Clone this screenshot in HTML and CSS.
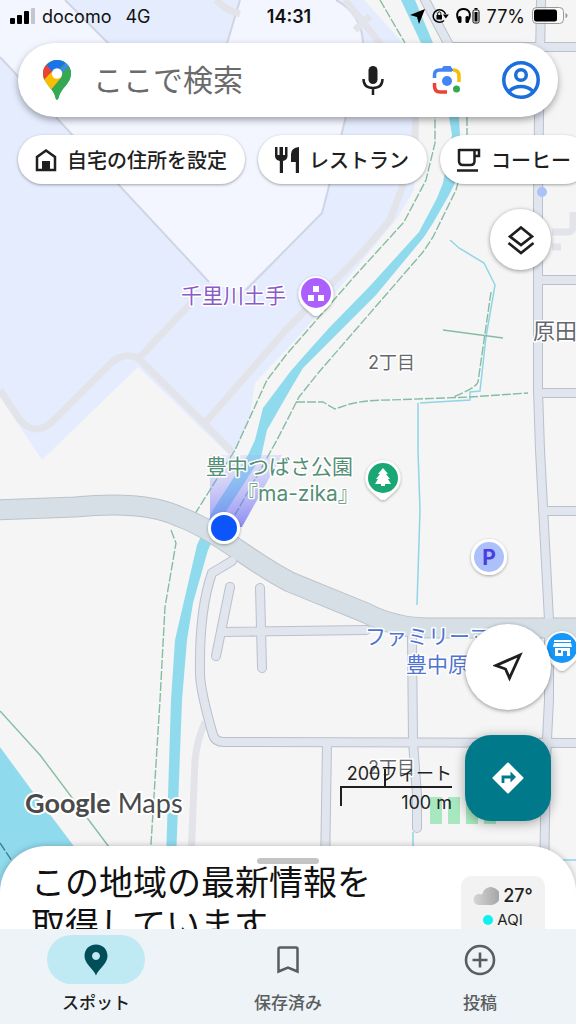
FILE: index.html
```html
<!DOCTYPE html>
<html lang="ja">
<head>
  <meta charset="UTF-8" />
  <meta name="viewport" content="width=device-width, initial-scale=1" />
  <title>Google Maps</title>
  <link rel="stylesheet" href="styles.css">
</head>
<body>
  <div class="app">
    <svg class="map" viewBox="0 0 576 1024" preserveAspectRatio="xMidYMin slice">
      <defs>
        <linearGradient id="beam" x1="0.3" y1="1" x2="0.1" y2="0">
          <stop offset="0" stop-color="#5a58f0" stop-opacity="0.65" />
          <stop offset="1" stop-color="#a9a8ff" stop-opacity="0.15" />
        </linearGradient>
        <filter id="shadow" x="-30%" y="-30%" width="160%" height="160%">
          <feDropShadow dx="0" dy="1" stdDeviation="1.5" flood-opacity="0.35" />
        </filter>
      </defs>

      <!-- airport -->
      <path class="airport" d="M0 0H364L403 43L418 80V117L414 190L396 220L300 335L255 383L250 415L236 450L230 456L138 367L42 460L0 397Z" />
      <path class="apron" d="M0 0H336Q362 14 363 43L345 120L328 190L322 213L240 293L209 282L0 57Z" />
      <path class="airport edge" d="M65 0L160 95L222 60L240 0" />
      <path class="line edge" d="M0 57L209 282M336 0Q362 14 363 43L345 120L328 190L322 213L246 290" />
      <path class="line path" d="M216 0Q226 10 240 14M345 0L380 43L416 100L415 140L402 188L390 220L360 255L286 330L205 423M355 30L370 16" />
      <path class="line path" d="M0 390L20 420Q36 438 54 420L112 362Q125 352 138 358L205 424L232 452M140 357L192 302" />

      <!-- water -->
      <path class="water" d="M401 0H415L433 43L457 100L459 117L460 135L455 183L449 195L433 223L424 237L376 295L323 348L303 368L290 390L267 430L261 457L227 510L208 550L193 603L187 640L182 700L176 860H166L171 700L175 640L197 545L213 510L248 455L255 440L263 408L290 372L303 357L329 328L369 287L419 232L437 198L443 183L452 135L449 117L421 43Z" />
      <path class="water" d="M0 747L30 788L73 845L110 900H0Z" />
      <path class="line stream" d="M450 240L459 248L484 263L495 285L486 337L480 391L470 392V400L420 403M418 403L418 450L420 510L417 605M413 832V860M555 860H576" />

      <!-- trails -->
      <path class="line trail" d="M380 0L405 43L435 117V143L426 180L404 222L353 278L286 355L267 380L235 450L193 517" />
      <path class="line trail" d="M467 117V150L456 190L433 237L423 252L319 372L299 397L277 440L235 515" />
      <path class="line trail" d="M171 530L176 543L165 607L160 700L150 860" />
      <path class="line trail" d="M296 402H323L335 409L350 404Q365 400 390 400L470 397L528 393M491 292L478 382Q476 388 453 397" />
      <path class="line trail solid" d="M443 330L503 338M0 711L40 755L115 855" />
      <path class="line trail dark" d="M0 843L14 864" />

      <!-- roads -->
      <path class="line path" d="M552 232H568Q573 232 573 226V212M552 247H561" />
      <path class="line path" d="M205 722Q197 740 195 760L191 860" />
      <g class="line road-edge">
        <path id="street" d="M425 0L450 47H576M541 0L539 117L538 200V390L540 450L549 620V700L546 760L544 880M538 280H576M538 393H576M543 511H576M232 561L212 573Q199 610 200 673Q200 690 213 735Q215 742 224 742L576 743M412 637L413 742L417 795V828M327 743L325 870M230 587L216 656M260 588L262 668M223 632L366 630" />
      </g>
      <path class="line highway-edge" d="M-5 510L75 507Q145 500 180 517C220 532 250 562 290 582L366 613Q395 628 430 628H580" />
      <g class="line road">
        <use href="#street" />
      </g>
      <path class="line highway" d="M-5 510L75 507Q145 500 180 517C220 532 250 562 290 582L366 613Q395 628 430 628H580" />

      <path class="park" d="M430 797h12v27h-12zM448 797h12v27h-12zM466 797h12v27h-12zM484 797h12v27h-12z" />

      <!-- current position -->
      <path d="M210 455L282 455L242 527H210Z" fill="url(#beam)" />
      <circle cx="224" cy="528" r="16" fill="#fff" filter="url(#shadow)" />
      <circle cx="224" cy="528" r="13" fill="#0b55fb" />

      <!-- pins -->
      <g filter="url(#shadow)" fill="#fff">
        <path d="M316 276a18 18 0 0 1 12 31l-9 8q-3 2-6 0l-9-8a18 18 0 0 1 12-31z" />
        <path d="M383 460a18 18 0 0 1 12 31l-9 8q-3 2-6 0l-9-8a18 18 0 0 1 12-31z" />
        <path d="M562 631a18 18 0 0 1 12 31l-9 8q-3 2-6 0l-9-8a18 18 0 0 1 12-31z" />
        <circle cx="489" cy="557" r="18" />
      </g>
      <circle cx="316" cy="293" r="15" fill="#ab5fff" />
      <path fill="#fff" d="M313 286h6v6h-6zM308 295h6v6h-6zM318 295h6v6h-6z" />
      <circle cx="383" cy="478" r="15" fill="#19a874" />
      <path fill="#fff" d="M383 468l5 6h-2l4 5h-2l3 5h-6v2h-4v-2h-6l3-5h-2l4-5h-2z" />
      <circle cx="562" cy="648" r="15" fill="#1797f8" />
      <path fill="#fff" d="M554 640h17v2h-17zM554 643h17l1 4h-19zM555 648h15v8h-3v-5h-4v5h-8zM558 650v3h3v-3z" fill-rule="evenodd" />
      <circle cx="489" cy="557" r="15" fill="#acc1fa" />
      <circle cx="542" cy="192" r="5" fill="#acc1fa" />

      <g class="labels">
        <text class="parking" x="489" y="565" text-anchor="middle">P</text>
        <text class="sight" x="181" y="303">千里川土手</text>
        <text class="green" x="206" y="474">豊中つばさ公園</text>
        <text class="green" x="237" y="501">『ma-zika』</text>
        <text class="shop" x="365" y="644">ファミリーマ</text>
        <text class="shop" x="406" y="672">豊中原</text>
        <text class="town" x="533" y="339">原田</text>
        <text class="block" x="368" y="369">2丁目</text>
        <text class="block" x="368" y="774">2丁目</text>
      </g>
    </svg>

    <header class="top">
      <div class="status">
        <div class="status-left">
          <svg width="26" height="16" viewBox="0 0 26 16">
            <rect x="0" y="10" width="5" height="6" rx="1" />
            <rect x="7" y="7" width="5" height="9" rx="1" />
            <rect x="14" y="3" width="5" height="13" rx="1" />
            <rect x="21" y="0" width="4" height="16" rx="1" fill="#c3c6d0" />
          </svg>
          <span>docomo</span>
          <span>4G</span>
        </div>
        <div class="clock">14:31</div>
        <div class="status-right">
          <svg width="15" height="15" viewBox="0 0 15 15"><path d="M15 0L9 15L7 8L0 6Z" /></svg>
          <svg width="17" height="16" viewBox="0 0 17 16">
            <path d="M13.500 6A6.300 6.300 0 1 0 12 12.500" fill="none" stroke="#000" stroke-width="1.500" />
            <path d="M10.800 6.500h6l-3 4z" />
            <rect x="4.500" y="7" width="5.500" height="4.500" rx="0.500" />
            <path d="M5.700 7V5.500a1.600 1.600 0 0 1 3.200 0V7" fill="none" stroke="#000" />
          </svg>
          <svg width="24" height="16" viewBox="0 0 24 16">
            <path d="M3 13C-1 6 2 1 7.500 1S16 6 12 13" fill="none" stroke="#000" stroke-width="2" />
            <rect x="2" y="8" width="3.500" height="7" rx="1.500" />
            <rect x="9.500" y="8" width="3.500" height="7" rx="1.500" />
            <rect x="17" y="2" width="6" height="13" rx="1.500" fill="none" stroke="#000" />
            <rect x="18.500" y="4" width="3" height="9.500" /><rect x="18.500" y="0" width="3" height="1.500" />
          </svg>
          <span>77%</span>
          <svg width="36" height="18" viewBox="0 0 36 18">
            <rect x="0.500" y="0.500" width="31" height="16" rx="4" fill="#fff" fill-opacity="0.500" stroke="#999" />
            <rect x="2" y="2.500" width="23" height="12" rx="2.500" />
            <path d="M33.500 6v5q2-0.500 2-2.500t-2-2.500z" fill="#999" />
          </svg>
        </div>
      </div>

      <form class="search">
        <svg width="28" height="40" viewBox="0 0 28 40">
          <clipPath id="pin"><path d="M14 0C22 0 28 6 28 13.500C28 24 18 27 15.300 38.500Q14 41 12.700 38.500C11.500 31 7 28.500 3 22.500C1 19.500 0 17 0 13.500C0 6 6 0 14 0Z" /></clipPath>
          <g clip-path="url(#pin)">
            <rect width="28" height="40" fill="#34a853" />
            <path d="M14 13.500L23.500 2.500L30 9L14 27Z" fill="#4285f4" />
            <path d="M26 6L30 8V40H12L4 28Z" fill="#34a853" />
            <path d="M0 18L9 12L19 16.500L7 31L0 30Z" fill="#fbbc04" />
            <path d="M-1 22L11 9L2 4L-2 10Z" fill="#ea4335" />
            <path d="M3.500 4.500L14 -2L23 2L11 14Z" fill="#1a73e8" />
          </g>
          <circle cx="14" cy="13.500" r="5.200" fill="#fff" />
        </svg>
        <input type="text" placeholder="ここで検索" aria-label="ここで検索" />
        <button type="button" class="icon" aria-label="音声検索">
          <svg width="22" height="30" viewBox="0 0 22 30" fill="none" stroke="#1f1f1f" stroke-width="2.500">
            <rect x="6.500" y="1" width="9" height="18" rx="4.500" fill="#1f1f1f" stroke="none" />
            <path d="M1.500 14Q1.500 23 11 23T20.500 14M11 23V30" />
          </svg>
        </button>
        <button type="button" class="icon" aria-label="レンズ">
          <svg width="30" height="30" viewBox="0 0 30 30" fill="none" stroke-width="3.500">
            <path d="M2.500 13V10Q2.500 5 7.500 5H20" stroke="#4285f4" />
            <path d="M8 6L11.500 1H18.500L22 6Z" fill="#4285f4" />
            <path d="M21 5Q27 5 27 11V17" stroke="#fbbc04" />
            <path d="M2.500 18V21Q2.500 27 8 27H15" stroke="#ea4335" />
            <circle cx="15" cy="16" r="5" fill="#4285f4" />
            <circle cx="24.500" cy="24" r="3.500" fill="#34a853" />
          </svg>
        </button>
        <button type="button" class="icon" aria-label="アカウント">
          <svg width="38" height="38" viewBox="0 0 38 38" fill="none" stroke="#1a6fdc" stroke-width="3.500">
            <circle cx="19" cy="19" r="17.200" />
            <circle cx="19" cy="14" r="5.300" />
            <path d="M7.500 30Q12 25.500 19 25.500T30.500 30" />
          </svg>
        </button>
      </form>

      <div class="chips">
        <button class="chip">
          <svg width="22" height="24" viewBox="0 0 22 24">
            <path d="M2 22V9L11 2.500L20 9V22Z" fill="none" stroke="#1f1f1f" stroke-width="2.500" />
            <rect x="7" y="13" width="8" height="9" fill="#1f1f1f" />
          </svg>
          自宅の住所を設定
        </button>
        <button class="chip">
          <svg width="24" height="26" viewBox="0 0 24 26" fill="#1f1f1f">
            <path d="M0 0h2.500v8h2V0H8v8h2V0h2.500v9Q12.500 13 8 14V26H4.800V14Q0 13 0 9Z" />
            <path d="M24 0V26H20.800V15H16V7Q16 1 24 0Z" />
          </svg>
          レストラン
        </button>
        <button class="chip">
          <svg width="24" height="24" viewBox="0 0 24 24" fill="none" stroke="#1f1f1f" stroke-width="2.500">
            <path d="M2 2H22V8H17.500M17.500 2V13Q17.500 17 13.500 17H6Q2 17 2 13V1M0 22.500H21" />
          </svg>
          コーヒー
        </button>
      </div>
    </header>

    <main class="controls">
      <button class="round layers" aria-label="レイヤ">
        <svg width="28" height="30" viewBox="0 0 28 30" fill="none" stroke="#1f1f1f" stroke-width="2.700">
          <path d="M14 2.500L25 11.500L14 20L3 11.500ZM1.500 18L14 28L26.500 18" />
        </svg>
      </button>
      <div class="bottom-row">
        <div class="logo"><b>Google</b> Maps</div>
        <div class="scale">
          <span class="feet">200フィート</span>
          <span class="meters">100 m</span>
        </div>
        <div class="fabs">
          <button class="round locate" aria-label="現在地">
            <svg width="30" height="30" viewBox="0 0 30 30" fill="none" stroke="#1f1f1f" stroke-width="2.800">
              <path d="M27 3L16.500 26L12.500 17L3 13.500Z" />
            </svg>
          </button>
          <button class="directions" aria-label="経路">
            <svg width="32" height="32" viewBox="0 0 32 32">
              <path d="M16 1.500L30.500 16L16 30.500L1.500 16Z" fill="#fff" stroke="#fff" stroke-width="2" stroke-linejoin="round" />
              <path d="M11 21V15H20" fill="none" stroke="#007a8a" stroke-width="2.800" />
              <path d="M18.500 9.500L24 15L18.500 20.500Z" fill="#007a8a" />
            </svg>
          </button>
        </div>
      </div>
    </main>

    <section class="sheet">
      <div class="handle"></div>
      <div class="sheet-body">
        <h1>この地域の最新情報を<br>取得しています</h1>
        <div class="weather">
          <div class="temp">
            <svg width="26" height="18" viewBox="0 0 26 18">
              <defs>
                <linearGradient id="cloud"><stop offset="0" stop-color="#d6d6d6" /><stop offset="1" stop-color="#a4a4a4" /></linearGradient>
              </defs>
              <path d="M6 18A5.500 5.500 0 0 1 6 7Q8 7 9 7.500A9 9 0 1 1 17 18Z" fill="url(#cloud)" />
            </svg>
            27°
          </div>
          <div class="aqi"><i class="dot"></i>AQI</div>
        </div>
      </div>
    </section>

    <nav class="tabs">
      <a href="#" class="tab active">
        <span class="pill">
          <svg width="24" height="32" viewBox="0 0 24 32">
            <path d="M12 0.500C19 0.500 23.500 5.500 23.500 12C23.500 20 15 24 12 31.500C9 24 0.500 20 0.500 12C0.500 5.500 5 0.500 12 0.500ZM12 8a4 4 0 1 0 0.010 0Z" fill="#004f58" fill-rule="evenodd" />
          </svg>
        </span>
        スポット
      </a>
      <a href="#" class="tab">
        <span class="pill">
          <svg width="22" height="28" viewBox="0 0 22 28">
            <path d="M1.500 25.500V3Q1.500 1.500 3 1.500H19Q20.500 1.500 20.500 3V25.500L11 21.500Z" fill="none" stroke="#5a5d60" stroke-width="2.500" />
          </svg>
        </span>
        保存済み
      </a>
      <a href="#" class="tab">
        <span class="pill">
          <svg width="32" height="32" viewBox="0 0 32 32" fill="none" stroke="#5a5d60" stroke-width="2.600">
            <circle cx="16" cy="16" r="14" />
            <path d="M16 8.500V23.500M8.500 16H23.500" />
          </svg>
        </span>
        投稿
      </a>
    </nav>
  </div>
</body>
</html>
```
FILE: styles.css
```css
* {
  box-sizing: border-box;
}

body {
  margin: 0;
  font-family: Inter, "Noto Sans CJK JP", sans-serif;
  color: #1f1f1f;
}

button {
  border: none;
  padding: 0;
  background: none;
  font: inherit;
  color: inherit;
  cursor: pointer;
}

svg {
  display: block;
  flex-shrink: 0;
}

.app {
  position: relative;
  display: flex;
  flex-direction: column;
  height: 100vh;
  overflow: hidden;
  background: #f5f5f5;
}

/* map canvas, lies under everything */
.map {
  position: absolute;
  inset: 0;
  width: 100%;
  height: 100%;
}

.line { fill: none; }
.airport { fill: #e5ecfd; }
.apron { fill: #f3f6ff; }
.edge { stroke: #d0d5e3; stroke-width: 2; }
.path { stroke: #e2e4ea; stroke-width: 7; }
.water { fill: #90daed; }
.stream { stroke: #90d5e6; stroke-width: 1.5; }
.trail { stroke: #86bda2; stroke-width: 1.4; stroke-dasharray: 9 2; }
.solid { stroke-dasharray: none; }
.dark { stroke: #46808c; }
.park { fill: #a8e8c0; }

.road-edge,
.road {
  stroke-linecap: round;
}

.road-edge { stroke: #bac0cd; stroke-width: 10; }
.road { stroke: #e0e5ee; stroke-width: 8; }
.highway-edge { stroke: #bcc3ca; stroke-width: 21; }
.highway { stroke: #d6dfe6; stroke-width: 19; }

.labels text {
  font-size: 21px;
  stroke: #fff;
  stroke-width: 3px;
  stroke-linejoin: round;
  paint-order: stroke;
}

.labels .sight { fill: #8a5bc8; }
.labels .green { fill: #558f76; }
.labels .shop { fill: #4f74d0; }
.labels .town { fill: #65686c; font-size: 22px; }
.labels .block { fill: #65686c; font-size: 18px; }
.labels .parking { fill: #4a3ee0; font-weight: 700; stroke: none; }

.top,
.controls,
.sheet,
.tabs {
  position: relative;
}

.status {
  display: grid;
  grid-template-columns: 1fr auto 1fr;
  align-items: center;
  height: 32px;
  padding: 0 8px 0 10px;
  font-size: 18px;
  color: #111;
}

.status-left,
.status-right {
  display: flex;
  align-items: center;
  gap: 6px;
}

.status-left span + span {
  margin-left: 8px;
}

.status-right {
  justify-content: flex-end;
  gap: 7px;
}

.clock {
  font-weight: 600;
}

.search {
  display: flex;
  align-items: center;
  height: 74px;
  margin: 11px 18px 0;
  padding: 0 18px 0 25px;
  border-radius: 37px;
  background: #fff;
  box-shadow: 0 3px 7px rgba(0, 0, 0, 0.35);
}

.search input {
  flex: 1;
  min-width: 0;
  margin-left: 22px;
  padding: 0;
  border: none;
  outline: none;
  background: none;
  font: inherit;
  font-size: 30px;
}

.search input::placeholder {
  color: #6b6b6b;
  opacity: 1;
}

.icon {
  display: flex;
  justify-content: center;
  width: 38px;
  margin-left: 36px;
}

.chips {
  display: flex;
  gap: 13px;
  padding: 18px 0 8px 18px;
  overflow: hidden;
}

.chip {
  display: flex;
  flex-shrink: 0;
  align-items: center;
  gap: 10px;
  height: 49px;
  padding: 0 18px 0 17px;
  border-radius: 25px;
  background: #fff;
  box-shadow: 0 1px 3px rgba(0, 0, 0, 0.35);
  font-size: 20px;
  font-weight: 500;
}

.controls {
  display: flex;
  flex: 1;
  flex-direction: column;
  justify-content: space-between;
  padding: 17px 25px 25px;
}

.round {
  display: flex;
  align-items: center;
  justify-content: center;
  border-radius: 50%;
  background: #fff;
  box-shadow: 0 1px 4px rgba(0, 0, 0, 0.4);
}

.layers {
  align-self: flex-end;
  width: 61px;
  height: 61px;
}

.bottom-row {
  display: flex;
  align-items: flex-end;
}

.logo {
  flex: 1;
  font-family: Lato, sans-serif;
  font-size: 27px;
  line-height: 36px;
  color: #4a4a4a;
  -webkit-text-stroke: 4px #fff;
  paint-order: stroke fill;
}

.logo b {
  font-weight: 700;
}

.scale {
  display: flex;
  flex-direction: column;
  width: 112px;
  margin: 0 13px 6px 0;
  font-size: 18px;
  line-height: 24px;
  text-align: right;
}

.feet {
  position: relative;
  border-bottom: 2px solid #1f1f1f;
  white-space: nowrap;
}

.feet::before,
.meters::before {
  content: "";
  position: absolute;
  left: 0;
  top: 0;
  width: 2px;
  height: 18px;
  background: #1f1f1f;
}

.feet::before {
  left: 44px;
  top: 7px;
}

.meters {
  position: relative;
  padding-top: 3px;
}

.fabs {
  display: flex;
  flex-direction: column;
  gap: 25px;
}

.locate {
  width: 86px;
  height: 86px;
}

.directions {
  display: flex;
  align-items: center;
  justify-content: center;
  width: 86px;
  height: 86px;
  border-radius: 26px;
  background: #007a8a;
  box-shadow: 0 2px 12px rgba(0, 0, 0, 0.35);
}

.sheet {
  height: 83px;
  padding: 12px 31px 0;
  border-radius: 46px 46px 0 0;
  background: #fff;
  box-shadow: 0 0 6px rgba(0, 0, 0, 0.25);
  overflow: hidden;
}

.handle {
  width: 62px;
  height: 6px;
  margin: 0 auto;
  border-radius: 3px;
  background: #c4c4c4;
}

.sheet-body {
  display: flex;
  align-items: flex-start;
  justify-content: space-between;
}

.sheet h1 {
  margin: -2px 0 0;
  font-size: 34px;
  font-weight: 400;
  line-height: 42px;
  color: #111;
}

.weather {
  width: 84px;
  margin-top: 12px;
  padding: 8px 0;
  border-radius: 10px;
  background: #f2f2f2;
}

.temp,
.aqi {
  display: flex;
  align-items: center;
  justify-content: center;
  gap: 4px;
  font-size: 18px;
  font-weight: 500;
  line-height: 24px;
}

.aqi {
  font-size: 15px;
  font-weight: 400;
}

.dot {
  width: 10px;
  height: 10px;
  border-radius: 50%;
  background: #0ff0f0;
}

.tabs {
  display: flex;
  height: 95px;
  padding-top: 6px;
  background: #edf3f6;
}

.tab {
  display: flex;
  flex: 1;
  flex-direction: column;
  align-items: center;
  gap: 7px;
  font-size: 17px;
  font-weight: 500;
  line-height: 24px;
  color: #5a5d60;
  text-decoration: none;
}

.pill {
  display: flex;
  align-items: center;
  justify-content: center;
  width: 98px;
  height: 49px;
  border-radius: 25px;
}

.active {
  color: #1f1f1f;
}

.active .pill {
  background: #c0eaf3;
}
```
